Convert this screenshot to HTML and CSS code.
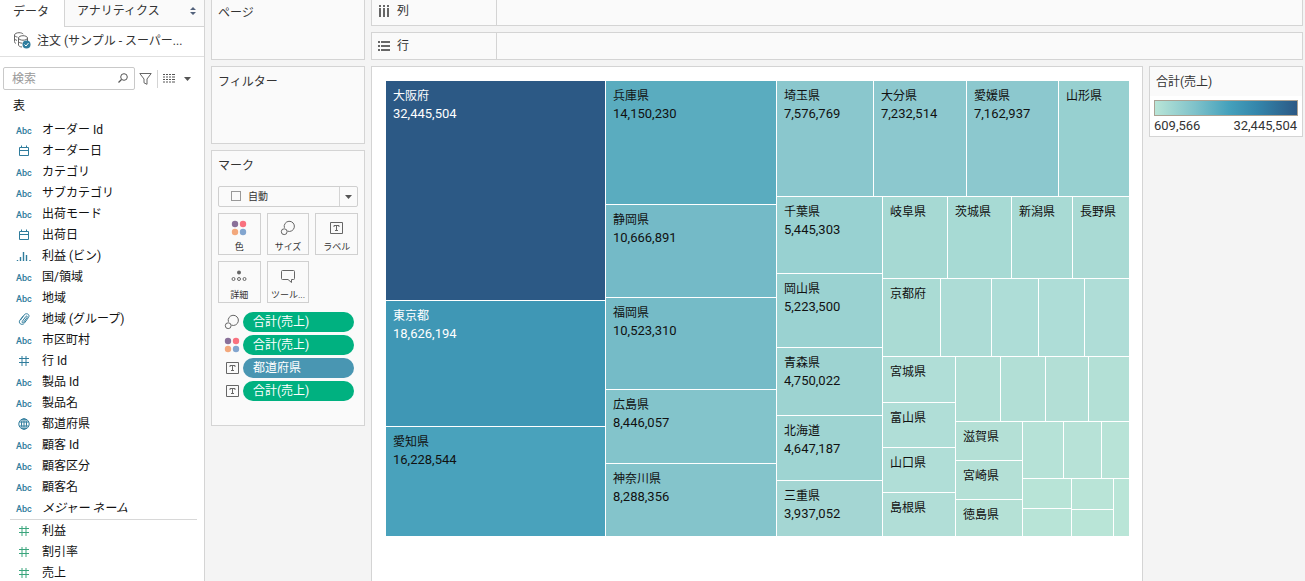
FILE: index.html
```html
<!DOCTYPE html>
<html lang="ja">
<head>
<meta charset="utf-8">
<title>ワークシート</title>
<link rel="stylesheet" href="styles.css">
</head>
<body>
<svg class="defs" aria-hidden="true">
  <symbol id="i-date" viewBox="0 0 12 12"><path d="M1.5 2.5h9v8h-9zM1.5 5.5h9M3.5 0.5v2M8.5 0.5v2"/></symbol>
  <symbol id="i-hash" viewBox="0 0 12 12"><path d="M4 1v10M8 1v10M1 3.500h10M1 7.500h10"/></symbol>
  <symbol id="i-bin" viewBox="0 0 14 12"><path d="M0.5 10v1M3.5 7v4M6.5 2v9M9.5 5v6M13 10v1" stroke-width="1.4"/></symbol>
  <symbol id="i-clip" viewBox="0 0 12 12"><path d="M2.4 7.2 6.2 1.9C7.3.3 9.600.5 10.500 1.600c.8 1 .6 2-.1 3L6.300 10.200c-1 1.400-2.900 1.500-4 .6s-1.300-2.300-.4-3.600L5 3.200M4.200 8.500l3.600-5c.7-1 2-.1 1.300.9L5.500 9.400c-.7.9-2 .1-1.300-.9z"/></symbol>
  <symbol id="i-globe" viewBox="0 0 12 12"><circle cx="6" cy="6" r="5.200"/><ellipse cx="6" cy="6" rx="2.500" ry="5.200"/><path d="M1.500 4h9M1.500 8h9M6 1v10"/></symbol>
  <symbol id="i-size" viewBox="0 0 16 16"><path d="M4.400 7.800A5.100 5.100 0 1 1 7.400 11.100"/><circle cx="4.200" cy="11.700" r="2.900"/></symbol>
  <symbol id="i-color" viewBox="0 0 16 16"><g stroke="none"><circle cx="4" cy="4" r="3.200" fill="#8a7099"/><circle cx="12" cy="4" r="3.200" fill="#f9717f"/><circle cx="4" cy="12" r="3.200" fill="#f3a87c"/><circle cx="12" cy="12" r="3.200" fill="#82a5cf"/></g></symbol>
  <symbol id="i-label" viewBox="0 0 13 12"><path d="M.5.5h12v11H.5zM4 5V3.500h5V5M6.500 3.500v5M5 8.500h3"/></symbol>
  <symbol id="i-detail" viewBox="0 0 16 12"><circle cx="8" cy="2.500" r="2" fill="#666" stroke="none"/><circle cx="2.500" cy="9" r="1.500"/><circle cx="8" cy="9" r="1.500"/><circle cx="13.500" cy="9" r="1.500"/></symbol>
  <symbol id="i-tip" viewBox="0 0 14 14"><path d="M1.500 1.500h11q1 0 1 1v7q0 1-1 1h-2v3l-3.500-3H1.500q-1 0-1-1v-7q0-1 1-1z"/></symbol>
</svg>

<aside class="sidebar">
  <div class="tabs" role="tablist">
    <button class="tab tab-active" role="tab" aria-selected="true">データ</button>
    <button class="tab tab-rest" role="tab" aria-selected="false">アナリティクス
      <svg width="6" height="8" viewBox="0 0 6 8"><path d="M0 3 3 0l3 3zM0 5l3 3 3-3z" fill="#53627c"/></svg>
    </button>
  </div>
  <div class="source">
    <svg width="17" height="17" viewBox="0 0 17 17" fill="none" stroke="#666"><path d="M2 11.500C.8 10.900.5 10.300.5 9.500V3C.5 1.800 2.500.7 5 .7c2 0 3.800.6 4.300 1.500M.5 3c0 1 1.200 1.800 3 2.100M.5 6.500c0 .8 1 1.500 2.500 1.900M4.500 6c0-1.300 2-2.300 4.500-2.300s4.500 1 4.500 2.300S11.500 8.200 9 8.200 4.500 7.200 4.500 6zM4.500 6v7c0 1 1.500 1.900 3.500 2M13.500 6v3M4.500 9.500c.3.900 1.800 1.600 3.800 1.700"/><circle cx="12.500" cy="12.500" r="4" fill="#2e7d9e" stroke="none"/><path d="m10.500 12.500 1.500 1.500 2.500-3" stroke="#fff"/></svg>
    <span>注文 (サンプル - スーパー...</span>
  </div>
  <div class="tools">
    <label class="search">
      <input type="text" placeholder="検索" aria-label="検索">
      <svg width="10" height="10" viewBox="0 0 10 10" fill="none" stroke="#555"><circle cx="6" cy="4" r="3.300"/><path d="M3.500 6.500.5 9.500" stroke-width="1.300"/></svg>
    </label>
    <button class="tool" aria-label="フィルター"><svg width="13" height="12" viewBox="0 0 13 12" fill="none" stroke="#666"><path d="M.8.500h11.400L8 6v5.300L5 9.800V6z"/></svg></button>
    <button class="tool tool-view" aria-label="表示">
      <svg width="12" height="9" viewBox="0 0 12 9" stroke="#555"><path d="M0 .5h12M0 3h12M0 5.500h12M0 8h12" stroke-dasharray="2 1 2 1 2 1 3"/></svg>
      <svg width="7" height="4" viewBox="0 0 7 4"><path d="M0 0h7L3.500 4z" fill="#555"/></svg>
    </button>
  </div>
  <h2 class="table-title">表</h2>
  <ul class="fields">
    <li><b>Abc</b>オーダー Id</li>
    <li><svg><use href="#i-date"/></svg>オーダー日</li>
    <li><b>Abc</b>カテゴリ</li>
    <li><b>Abc</b>サブカテゴリ</li>
    <li><b>Abc</b>出荷モード</li>
    <li><svg><use href="#i-date"/></svg>出荷日</li>
    <li><svg><use href="#i-bin"/></svg>利益 (ビン)</li>
    <li><b>Abc</b>国/領域</li>
    <li><b>Abc</b>地域</li>
    <li><svg><use href="#i-clip"/></svg>地域 (グループ)</li>
    <li><b>Abc</b>市区町村</li>
    <li><svg><use href="#i-hash"/></svg>行 Id</li>
    <li><b>Abc</b>製品 Id</li>
    <li><b>Abc</b>製品名</li>
    <li><svg><use href="#i-globe"/></svg>都道府県</li>
    <li><b>Abc</b>顧客 Id</li>
    <li><b>Abc</b>顧客区分</li>
    <li><b>Abc</b>顧客名</li>
    <li><b>Abc</b><em>メジャー ネーム</em></li>
  </ul>
  <ul class="fields measures">
    <li><svg><use href="#i-hash"/></svg>利益</li>
    <li><svg><use href="#i-hash"/></svg>割引率</li>
    <li><svg><use href="#i-hash"/></svg>売上</li>
  </ul>
</aside>

<section class="cards">
  <div class="card card-pages"><h2>ページ</h2></div>
  <div class="card card-filters"><h2>フィルター</h2></div>
  <div class="card card-marks">
    <h2>マーク</h2>
    <div class="mark-type">
      <select aria-label="マークの種類"><option>自動</option></select>
      <span class="mark-box"></span>
      <span class="mark-arrow"><svg width="7" height="4" viewBox="0 0 7 4"><path d="M0 0h7L3.500 4z" fill="#555"/></svg></span>
    </div>
    <div class="mark-grid">
      <button><svg width="16" height="16"><use href="#i-color"/></svg>色</button>
      <button><svg width="16" height="16"><use href="#i-size"/></svg>サイズ</button>
      <button><svg width="13" height="12"><use href="#i-label"/></svg>ラベル</button>
      <button><svg width="16" height="12"><use href="#i-detail"/></svg>詳細</button>
      <button><svg width="14" height="14"><use href="#i-tip"/></svg>ツール...</button>
    </div>
    <ul class="pills">
      <li><svg width="16" height="16"><use href="#i-size"/></svg><button class="pill">合計(売上)</button></li>
      <li><svg width="16" height="16"><use href="#i-color"/></svg><button class="pill">合計(売上)</button></li>
      <li><svg width="13" height="12"><use href="#i-label"/></svg><button class="pill pill-dim">都道府県</button></li>
      <li><svg width="13" height="12"><use href="#i-label"/></svg><button class="pill">合計(売上)</button></li>
    </ul>
  </div>
</section>

<main class="main">
  <div class="shelf shelf-first">
    <div class="shelf-name"><svg width="12" height="12" viewBox="0 0 12 12" fill="#666"><path d="M1 0h2v2H1zM5 0h2v2H5zM9 0h2v2H9zM1 3h2v9H1zM5 3h2v9H5zM9 3h2v9H9z"/></svg>列</div>
  </div>
  <div class="shelf">
    <div class="shelf-name"><svg width="12" height="10" viewBox="0 0 12 10" fill="#666"><path d="M0 0h2v2H0zM0 4h2v2H0zM0 8h2v2H0zM3 0h9v2H3zM3 4h9v2H3zM3 8h9v2H3z"/></svg>行</div>
  </div>
  <div class="work">
    <div class="sheet"><div class="row treemap" id="treemap"></div></div>
    <section class="legend">
      <h2>合計(売上)</h2>
      <div class="ramp"></div>
      <div class="range"><span>609,566</span><span>32,445,504</span></div>
    </section>
  </div>
</main>
<script src="treemap.js"></script>
</body>
</html>
```
FILE: styles.css
```css
* { box-sizing: border-box; }
body {
  margin: 0;
  height: 100vh;
  display: flex;
  gap: 6px;
  padding-right: 2px;
  overflow: hidden;
  background: #f4f4f4;
  color: #333;
  font: 12px/18px Roboto, "Noto Sans CJK JP", sans-serif;
}
button, input, select { font: inherit; color: inherit; }
button { cursor: pointer; }
h2 { margin: 0; font-size: 12px; font-weight: 400; }
ul { margin: 0; padding: 0; list-style: none; }
svg { flex: none; }
.defs { display: none; }

.sidebar {
  flex: 0 0 205px;
  overflow: hidden;
  background: #fff;
  border-right: 1px solid #d4d4d4;
}
.tabs { display: flex; height: 27px; }
.tab { border: 0; background: none; padding: 0 12px 4px 13px; text-align: left; }
.tab-active { width: 64px; }
.tab-rest {
  flex: 1;
  display: flex;
  align-items: center;
  justify-content: space-between;
  padding: 0 8px 4px 12px;
  background: #fafafa;
  border-left: 1px solid #d4d4d4;
  border-bottom: 1px solid #d4d4d4;
}
.source {
  display: flex;
  align-items: center;
  gap: 6px;
  height: 30px;
  padding: 0 0 2px 14px;
  border-bottom: 1px solid #e0e0e0;
  white-space: nowrap;
}
.tools { display: flex; align-items: center; padding: 10px 0 0 3px; }
.search { position: relative; width: 132px; }
.search input {
  display: block;
  width: 100%;
  height: 23px;
  padding: 0 24px 0 8px;
  border: 1px solid #c9c9c9;
  border-radius: 2px;
  background: #fff;
}
.search input::placeholder { color: #999; opacity: 1; }
.search svg { position: absolute; right: 7px; top: 6px; }
.tool { display: flex; align-items: center; border: 0; background: none; padding: 0 5px 0 4px; }
.tool-view { height: 18px; gap: 9px; padding-left: 5px; border-left: 1px solid #d4d4d4; }
.table-title { padding: 7px 0 4px 13px; color: #111; }
.fields { color: #111; }
.fields li { display: flex; align-items: center; height: 21px; padding-left: 16px; }
.fields b {
  width: 26px;
  padding-top: 2px;
  color: #2f7c9c;
  font: 500 9px/18px Roboto, sans-serif;
}
.fields svg {
  width: 16px;
  height: 12px;
  margin-right: 10px;
  fill: none;
  stroke: #2f7c9c;
}
.measures { margin: 1px 7px 0 10px; border-top: 1px solid #d8d8d8; }
.measures li { padding-left: 6px; }
.measures svg { stroke: #3aa57c; }

.cards { flex: 0 0 154px; display: flex; flex-direction: column; gap: 6px; }
.card { padding: 6px; border: 1px solid #d4d4d4; background: #fafafa; }
.card-pages { min-height: 60px; border-top: 0; padding-top: 4px; }
.card-filters { min-height: 78px; }
.card-marks { padding-bottom: 24px; }
.mark-type { position: relative; margin: 11px 0 6px; }
.mark-type select {
  display: block;
  width: 100%;
  height: 21px;
  padding: 0 24px 0 29px;
  appearance: none;
  border: 1px solid #cfcfcf;
  border-radius: 2px;
  background: #fafafa;
  font-size: 10px;
}
.mark-box { position: absolute; left: 13px; top: 5px; width: 10px; height: 10px; border: 1px solid #999; }
.mark-arrow {
  position: absolute;
  right: 1px;
  top: 1px;
  bottom: 1px;
  width: 18px;
  display: grid;
  place-items: center;
  border-left: 1px solid #d4d4d4;
  pointer-events: none;
}
.mark-grid { display: grid; grid-template-columns: repeat(3, 1fr); gap: 6px; }
.mark-grid button {
  display: grid;
  grid-template-rows: 28px 10px;
  place-items: center;
  height: 42px;
  padding: 0 0 2px;
  border: 1px solid #d0d0d0;
  background: #fafafa;
  font-size: 9px;
  line-height: 10px;
  white-space: nowrap;
}
.mark-grid svg, .pills svg { fill: none; stroke: #666; }
.pills { display: grid; gap: 3px; margin: 9px 4px 0 6px; }
.pills li { display: grid; grid-template-columns: 16px 1fr; gap: 3px; place-items: center; }
.pill {
  width: 100%;
  height: 20px;
  padding: 0 10px;
  border: 0;
  border-radius: 10px;
  background: #00b180;
  color: #fff;
  line-height: 20px;
  text-align: left;
}
.pill-dim { background: #4996b2; }

.main { flex: 1; min-width: 0; display: flex; flex-direction: column; gap: 6px; }
.shelf { display: flex; flex: 0 0 28px; border: 1px solid #d4d4d4; background: #fafafa; }
.shelf-first { flex-basis: 26px; border-top: 0; }
.shelf-name {
  display: flex;
  align-items: center;
  gap: 7px;
  width: 125px;
  padding-left: 6px;
  border-right: 1px solid #d4d4d4;
}
.shelf-first .shelf-name { padding-bottom: 3px; }
.work { flex: 1; min-height: 0; display: flex; align-items: flex-start; gap: 6px; }
.sheet {
  align-self: stretch;
  flex: 1;
  display: flex;
  padding: 14px 13px 45px 14px;
  border: 1px solid #d4d4d4;
  border-bottom: 0;
  background: #fff;
}
.row, .col { display: flex; gap: 1px; min-width: 0; min-height: 0; }
.col { flex-direction: column; }
.treemap { flex: 1; }
.cell {
  display: flow-root;
  min-width: 0;
  min-height: 0;
  overflow: hidden;
  color: #111;
  line-height: 17px;
  white-space: nowrap;
}
.cell-light { color: #fff; }
.cell span { display: block; margin-left: 7px; }
.cell .name { margin-top: 7px; }
.cell .value, .range { font-size: 13px; }

.legend { flex: 0 0 154px; border: 1px solid #d4d4d4; background: #fff; }
.legend h2 { padding: 6px 6px 5px; background: #fafafa; }
.ramp {
  height: 16px;
  margin: 4px 4px 0;
  border: 1px solid #aaa294;
  background: linear-gradient(90deg, #b9e5d7, #7fc2ca 28%, #45a1bc 52%, #3486ab 72%, #2c5985);
}
.range { display: flex; justify-content: space-between; padding: 1px 5px 1px 4px; }
```
FILE: treemap.js
```js
const row = (size, ...items) => ({ dir: "row", size, items });
const col = (size, ...items) => ({ dir: "col", size, items });
const cell = (size, color, name, value, light) => ({ size, color, name, value, light });

const tree = row(1,
  col(219,
    cell(219, "#2c5985", "大阪府", "32,445,504", true),
    cell(125, "#3f97b5", "東京都", "18,626,194", true),
    cell(109, "#49a2bc", "愛知県", "16,228,544")),
  col(170,
    cell(123, "#5aacbf", "兵庫県", "14,150,230"),
    cell(92, "#74bac7", "静岡県", "10,666,891"),
    cell(91, "#75bbc7", "福岡県", "10,523,310"),
    cell(73, "#83c4cb", "広島県", "8,446,057"),
    cell(72, "#84c4cb", "神奈川県", "8,288,356")),
  col(352,
    row(115,
      cell(96, "#8ac7cd", "埼玉県", "7,576,769"),
      cell(92, "#8cc8ce", "大分県", "7,232,514"),
      cell(91, "#8cc8ce", "愛媛県", "7,162,937"),
      cell(70, "#97d0d0", "山形県")),
    row(339,
      col(105,
        cell(76, "#98d1d1", "千葉県", "5,445,303"),
        cell(73, "#9ad2d1", "岡山県", "5,223,500"),
        cell(67, "#9dd3d1", "青森県", "4,750,022"),
        cell(64, "#9ed4d2", "北海道", "4,647,187"),
        cell(55, "#a4d6d3", "三重県", "3,937,052")),
      col(246,
        row(81,
          cell(64, "#a6d9d3", "岐阜県"),
          cell(63, "#a7dad4", "茨城県"),
          cell(60, "#a8dad4", "新潟県"),
          cell(56, "#a9dad4", "長野県")),
        row(77,
          cell(57, "#aadbd4", "京都府"),
          cell(50, "#addcd6"),
          cell(46, "#aeddd7"),
          cell(45, "#aeddd7"),
          cell(44, "#afddd7")),
        row(179,
          col(72,
            cell(45, "#b0ded7", "宮城県"),
            cell(44, "#b0ded7", "富山県"),
            cell(44, "#b0ded7", "山口県"),
            cell(43, "#b1ded7", "島根県")),
          col(173,
            row(64,
              cell(44, "#b2dfd6"),
              cell(44, "#b2dfd6"),
              cell(42, "#b3dfd6"),
              cell(40, "#b3e0d6")),
            row(114,
              col(66,
                cell(38, "#b4e0d6", "滋賀県"),
                cell(38, "#b4e0d6", "宮崎県"),
                cell(36, "#b5e1d6", "徳島県")),
              col(106,
                row(56,
                  cell(40, "#b6e2d7"),
                  cell(37, "#b7e2d7"),
                  cell(27, "#b8e3d7")),
                row(57,
                  col(48, cell(29, "#b8e4d7"), cell(27, "#b8e4d7")),
                  col(41, cell(30, "#b9e4d7"), cell(26, "#b9e5d7")),
                  cell(15, "#b9e5d7"))))))))));

function draw(node) {
  const el = document.createElement("div");
  el.style.flex = `${node.size} 1 0px`;
  if (node.items) {
    el.className = node.dir;
    el.append(...node.items.map(draw));
    return el;
  }
  el.className = node.light ? "cell cell-light" : "cell";
  el.style.background = node.color;
  for (const part of ["name", "value"]) {
    if (!node[part]) continue;
    const text = document.createElement("span");
    text.className = part;
    text.textContent = node[part];
    el.append(text);
  }
  return el;
}

document.getElementById("treemap").append(...tree.items.map(draw));
```
